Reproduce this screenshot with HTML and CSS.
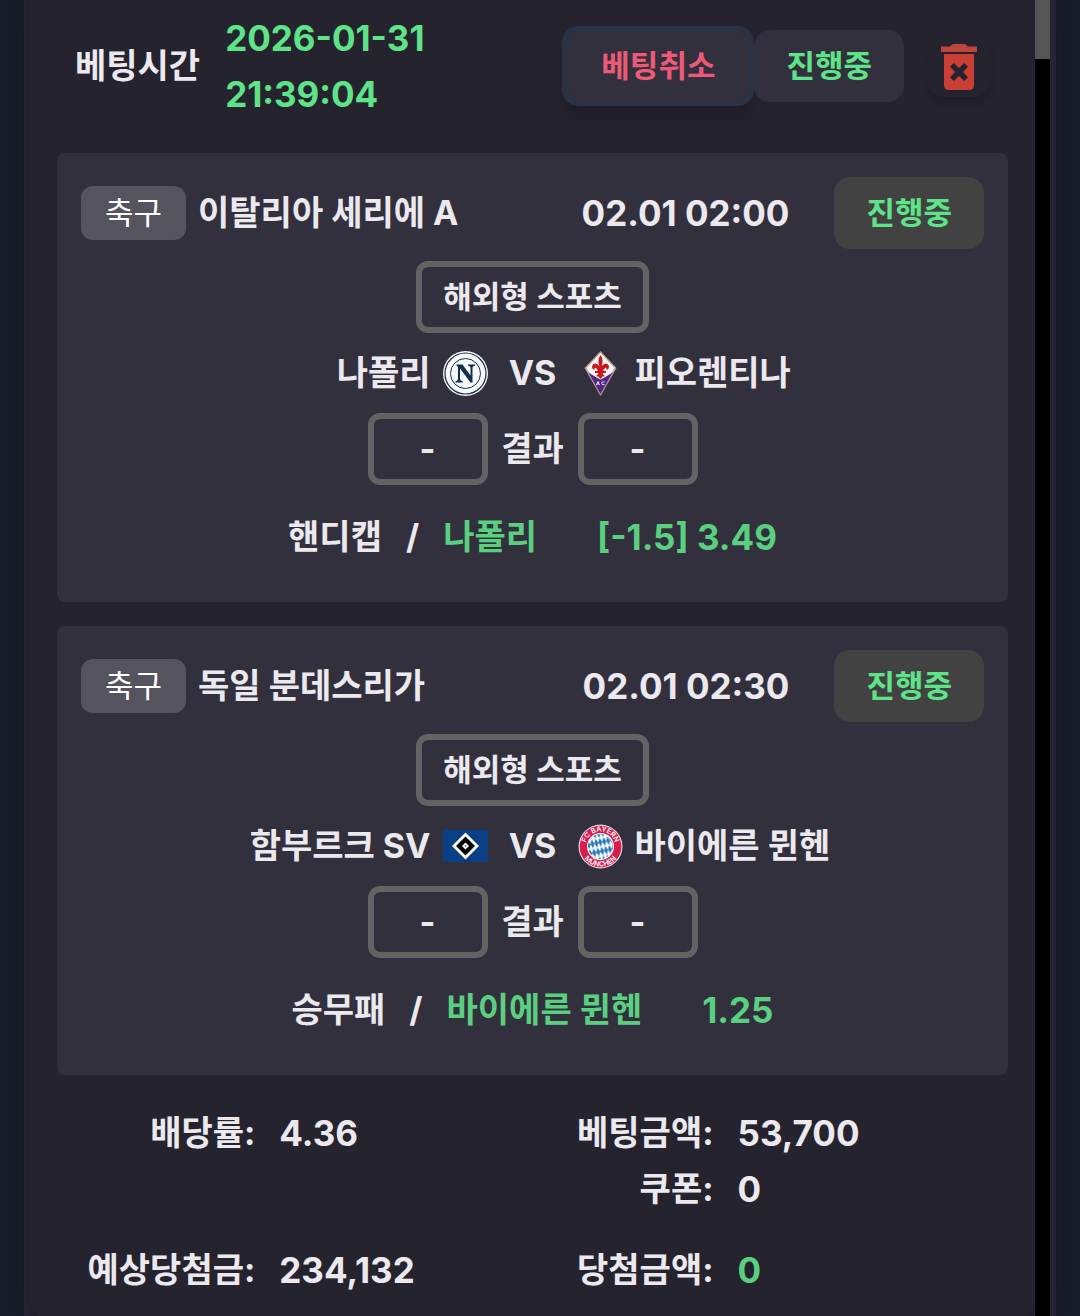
FILE: index.html
```html
<!DOCTYPE html>
<html lang="ko">
<head>
<meta charset="utf-8">
<meta name="viewport" content="width=device-width, initial-scale=1">
<title>베팅내역</title>
<link rel="stylesheet" href="styles.css">
</head>
<body>
<main class="panel">
  <section class="slip">
    <header class="slip-head">
      <span class="slip-label">베팅시간</span>
      <time class="slip-time" datetime="2026-01-31T21:39:04">2026-01-31 21:39:04</time>
      <div class="slip-actions">
        <button class="btn btn-cancel" type="button">베팅취소</button>
        <span class="status">진행중</span>
        <button class="btn-delete" type="button" aria-label="삭제">
          <svg width="38" height="48" viewBox="0 0 38 48" aria-hidden="true">
            <path fill="#bd453e" d="M1 3.500H10L13 1H25L28 3.500H37V9H1Z"/>
            <path fill="#cb3e34" fill-rule="evenodd" d="M4 11H34V42Q34 47 29 47H9Q4 47 4 42ZM13.800 20L10 23.800L15 29L10 34.200L13.800 38L19 33L24.200 38L28 34.200L23 29L28 23.800L24.200 20L19 25Z"/>
          </svg>
        </button>
      </div>
    </header>

    <div class="games">
      <article class="game">
        <div class="game-head">
          <span class="tag">축구</span>
          <h2 class="league">이탈리아 세리에 A</h2>
          <time class="kickoff">02.01 02:00</time>
          <span class="status status-game">진행중</span>
        </div>
        <div class="market">해외형 스포츠</div>
        <div class="versus">
          <div class="team team-home">나폴리
            <svg class="crest" viewBox="0 0 45 45" aria-hidden="true">
              <circle cx="22.500" cy="22.500" r="22.500" fill="#f7fafc"/>
              <circle cx="22.500" cy="22.500" r="20.500" fill="none" stroke="#1c2c48" stroke-width="1.200"/>
              <circle cx="22.500" cy="22.500" r="15" fill="none" stroke="#1c2c48" stroke-width="1"/>
              <path fill="#12304c" d="M13.500 13.500H19.500L27.500 24.500V16.500Q27.500 14.800 25 14.700V13.500H32V14.700Q29.500 14.800 29.500 16.500V31.500H27.500L17 17.500V28Q17 30 19.700 30.200V31.500H12.500V30.200Q15 30 15 28V16.200Q14.500 14.900 13.500 14.700Z"/>
            </svg>
          </div>
          <span class="vs">VS</span>
          <div class="team">
            <svg class="crest" viewBox="0 0 45 45" aria-hidden="true">
              <path fill="#b9a397" d="M22.500 0L38.500 17L22.500 45L6.500 17Z"/>
              <path fill="#fbf5f3" d="M22.500 2L36.500 17L32 24.500L22.500 28L13 24.500L8.500 17Z"/>
              <path fill="#53258a" d="M10.500 21.500L22.500 29L34.500 21.500L22.500 43Z"/>
              <path fill="#c9181f" d="M22.500 4Q19 9 21.300 15Q17.500 10.500 14.500 14Q13 18 16.500 19Q16 15.500 18.500 17.500L20 20H17V22H20.500Q20 24 18 25Q21 25.200 22.500 28Q24 25.200 27 25Q25 24 24.500 22H28V20H25L26.500 17.500Q29 15.500 28.500 19Q32 18 30.500 14Q27.500 10.500 23.700 15Q26 9 22.500 4Z"/>
              <path fill="none" stroke="#f3e7f4" stroke-width="1" d="M18.500 34L20 30.500L21.500 34M19 33H21M26.500 31Q23.500 30 23.800 32.500Q24 34.500 26.500 33.500"/>
            </svg>
            피오렌티나</div>
        </div>
        <div class="versus">
          <div class="score score-home">-</div>
          <span class="vs">결과</span>
          <div class="score">-</div>
        </div>
        <div class="pick">
          <span>핸디캡</span><span>/</span><span class="win">나폴리</span><span class="win odds">[-1.5] 3.49</span>
        </div>
      </article>

      <article class="game">
        <div class="game-head">
          <span class="tag">축구</span>
          <h2 class="league">독일 분데스리가</h2>
          <time class="kickoff">02.01 02:30</time>
          <span class="status status-game">진행중</span>
        </div>
        <div class="market">해외형 스포츠</div>
        <div class="versus">
          <div class="team team-home">함부르크 SV
            <svg class="crest" viewBox="0 0 45 45" aria-hidden="true">
              <path fill="#0a3f86" d="M0 6H45V38H0Z"/>
              <path fill="#fff" d="M22.500 8.500L36 22L22.500 35.500L9 22Z"/>
              <path fill="#050505" d="M22.500 12.500L32 22L22.500 31.500L13 22Z"/>
              <path fill="#fff" d="M22.500 18.500L26 22L22.500 25.500L19 22Z"/>
              <path fill="#555" d="M22.500 21L23.500 22L22.500 23L21.500 22Z"/>
            </svg>
          </div>
          <span class="vs">VS</span>
          <div class="team">
            <svg class="crest" viewBox="0 0 45 45" aria-hidden="true">
              <defs>
                <pattern id="lozenge" width="4" height="9" patternUnits="userSpaceOnUse" patternTransform="rotate(-12)">
                  <path fill="#fff" d="M0 0H4V9H0Z"/>
                  <path fill="#2376b9" d="M2 0L4 4.500L2 9L0 4.500Z"/>
                </pattern>
                <path id="arc-top" d="M7.500 22.500A15 15 0 0 1 37.500 22.500"/>
                <path id="arc-bottom" d="M2.500 22.500A20 20 0 0 0 42.500 22.500"/>
              </defs>
              <circle cx="22.500" cy="22.500" r="22" fill="#d9d3e2"/>
              <circle cx="22.500" cy="22.500" r="20.800" fill="#db1c4b"/>
              <circle cx="22.500" cy="22.500" r="13.500" fill="#fff"/>
              <circle cx="22.500" cy="22.500" r="12.500" fill="url(#lozenge)"/>
              <text class="crest-text"><textPath href="#arc-top" startOffset="50%">FC BAYERN</textPath></text>
              <text class="crest-text"><textPath href="#arc-bottom" startOffset="50%">MÜNCHEN</textPath></text>
            </svg>
            바이에른 뮌헨</div>
        </div>
        <div class="versus">
          <div class="score score-home">-</div>
          <span class="vs">결과</span>
          <div class="score">-</div>
        </div>
        <div class="pick">
          <span>승무패</span><span>/</span><span class="win">바이에른 뮌헨</span><span class="win odds">1.25</span>
        </div>
      </article>
    </div>

    <dl class="summary">
      <dt>배당률:</dt><dd>4.36</dd>
      <dt>베팅금액:</dt><dd>53,700</dd>
      <dt class="coupon">쿠폰:</dt><dd>0</dd>
      <dt class="payout">예상당첨금:</dt><dd class="payout">234,132</dd>
      <dt class="payout">당첨금액:</dt><dd class="payout win">0</dd>
    </dl>
  </section>
  <div class="scrollbar" aria-hidden="true"><div class="scroll-thumb"></div></div>
</main>
</body>
</html>
```
FILE: styles.css
```css
* {
  box-sizing: border-box;
}

body {
  margin: 0;
  padding: 0 24px;
  background: #171d29;
  color: #ebe9ee;
  font-family: Inter, "Noto Sans CJK KR", sans-serif;
  font-size: 34px;
  font-weight: 700;
  font-optical-sizing: none;
  line-height: 56px;
}

.panel {
  display: flex;
  min-height: 100vh;
  padding: 0 6px;
  background: #262430;
  box-shadow: 0 0 24px #1c1820;
}

.slip {
  flex: 1;
  min-width: 0;
  padding: 10px 27px 18px;
  border-radius: 0 0 12px 12px;
  background: #25232e;
  box-shadow: 0 2px 4px #1f1d28;
}

.scrollbar {
  width: 15px;
  background: #000;
}

.scroll-thumb {
  height: 59px;
  background: #555;
}

.slip-head {
  display: flex;
  align-items: center;
  padding: 0 18px;
}

.slip-label {
  flex: none;
  margin-right: 25px;
}

.slip-time,
.kickoff,
.odds,
.summary dd {
  font-size: 35px;
}

.slip-time {
  flex: 1;
  max-width: 240px;
  color: #5fe388;
}

.slip-actions {
  display: flex;
  flex: none;
  align-items: center;
  margin-left: auto;
}

.btn,
.status {
  padding: 8px 32px;
  border-radius: 16px;
  background: #32303d;
  font-family: inherit;
  font-size: 31px;
  font-weight: 700;
  line-height: 56px;
  white-space: nowrap;
}

.status {
  color: #5fe388;
}

.btn-cancel {
  padding: 6px 33px;
  border: 6px solid #2b3243;
  color: #ed5a78;
  box-shadow: 0 12px 12px -2px #1f1d28;
}

.btn-delete {
  display: flex;
  margin-left: 24px;
  padding: 7px 12px 6px;
  border: 0;
  border-radius: 16px;
  background: #25232e;
  box-shadow: 0 8px 8px -2px #1f1d28;
}

.games {
  display: grid;
  gap: 24px;
  margin-top: 31px;
}

.game {
  display: flex;
  flex-direction: column;
  gap: 12px;
  padding: 24px 24px 37px;
  border-radius: 8px;
  background: #32303d;
}

.game-head {
  display: flex;
  align-items: center;
}

.tag {
  padding: 0 24px;
  border-radius: 12px;
  background: #55535e;
  color: #fff;
  font-size: 31px;
  font-weight: 400;
  line-height: 54px;
}

.league {
  flex: 1;
  margin: 0 0 0 12px;
  font-size: 34px;
  font-weight: 700;
}

.kickoff {
  margin-right: 45px;
}

.status-game {
  background: #424242;
}

.market {
  align-self: center;
  padding: 0 21px;
  border: 6px solid #636363;
  border-radius: 12px;
  font-size: 31px;
  line-height: 60px;
}

.versus {
  display: grid;
  grid-template-columns: 1fr 90px 1fr;
  align-items: center;
}

.vs {
  text-align: center;
}

.team {
  display: flex;
  align-items: center;
  gap: 12px;
}

.team-home {
  justify-content: flex-end;
}

.crest {
  flex: none;
  width: 45px;
  height: 45px;
}

.crest-text {
  fill: #fff;
  font-size: 7px;
  font-weight: 600;
  text-anchor: middle;
}

.score {
  width: 120px;
  border: 6px solid #636363;
  border-radius: 12px;
  line-height: 60px;
  text-align: center;
}

.score-home {
  justify-self: end;
}

.pick {
  display: flex;
  justify-content: center;
  gap: 24px;
  margin-top: 12px;
}

.win {
  color: #5bcf80;
}

.odds {
  margin-left: 36px;
}

.summary {
  display: grid;
  grid-template-columns: 44fr 54fr 37fr 60fr;
  column-gap: 24px;
  margin: 30px 0 0;
}

.summary dt {
  text-align: right;
  white-space: nowrap;
}

.summary dd {
  margin: 0;
}

.coupon {
  grid-column: 3;
}

.summary .payout {
  margin-top: 25px;
}
```
